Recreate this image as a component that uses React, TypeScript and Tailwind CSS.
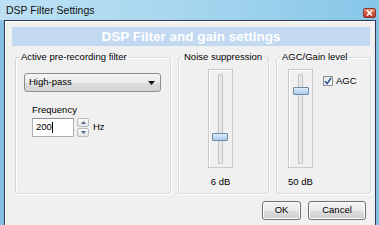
import React from "react";

function CloseButton() {
  return (
    <div className="mt-[8px] w-[13px] h-[10px] rounded-[2px] border border-[#8a3a2c] bg-gradient-to-b from-[#e9a08e] via-[#d0553d] to-[#c0382a] flex items-center justify-center">
      <svg width="7" height="6" viewBox="0 0 7 6">
        <path d="M1 0.5 L6 5.5 M6 0.5 L1 5.5" stroke="#ffffff" strokeWidth="1.6" />
      </svg>
    </div>
  );
}

function Slider({ thumbTop, thumbLeft }: { thumbTop: number; thumbLeft: number }) {
  return (
    <div className="relative w-[25px] h-[99px] border border-[#c9c9c9] bg-[#f0f0f0] shadow-[inset_1px_1px_0_#ffffff]">
      <div className="absolute left-[9px] top-[4px] bottom-[3px] w-[5px] border border-[#c4c4c4] bg-[#e8e8e8] rounded-[1px]" />
      <div
        className="absolute w-[16px] h-[8px] border border-[#6e8aa6] bg-gradient-to-b from-[#dcebf9] to-[#a9cbec] rounded-[1px]"
        style={{ top: thumbTop, left: thumbLeft }}
      />
    </div>
  );
}

function Group({ title, width, children }: { title: string; width: string; children: React.ReactNode }) {
  return (
    <fieldset
      className={`${width} h-[143px] border border-[#d2d8dc] rounded-[3px] shadow-[inset_1px_1px_0_#ffffff,1px_1px_0_#ffffff] min-w-0`}
    >
      <legend className="ml-[3px] px-[2px] leading-[12px]">{title}</legend>
      {children}
    </fieldset>
  );
}

function Button({ label, width }: { label: string; width: string }) {
  return (
    <div
      className={`${width} h-[19px] rounded-[3px] border border-[#707070] bg-[linear-gradient(to_bottom,#f3f3f3_0%,#ebebeb_50%,#dddddd_51%,#cfcfcf_100%)] shadow-[inset_0_0_0_1px_#fcfcfc] flex items-center justify-center`}
    >
      {label}
    </div>
  );
}

export default function App() {
  return (
    <div className="w-[379px] h-[225px] overflow-hidden flex flex-col bg-[#86bfe3] font-['Liberation_Sans',Arial,sans-serif] text-[9.5px] text-black">
      <div className="h-[20px] shrink-0 flex items-start justify-between pl-[6px] pr-[3px] bg-gradient-to-r from-[#bde1f3] via-[#a6d6ef] to-[#86c6e8]">
        <span className="text-[10.5px] leading-[20px] text-[#111]">DSP Filter Settings</span>
        <CloseButton />
      </div>
      <div className="flex-1 ml-[4px] mr-[3px] border border-b-0 border-[#2c3b4e] bg-[#f0f0f0] shadow-[inset_1px_1px_0_#ffffff] flex flex-col">
        <div className="mt-[6px] ml-[7px] mr-[5px] h-[19px] bg-[#c2d9f1] flex items-center justify-center">
          <span className="text-[13.5px] font-bold text-white leading-[19px]">DSP Filter and gain settings</span>
        </div>

        <div className="mt-[5px] ml-[10px] flex gap-[7px]">
          <Group title="Active pre-recording filter" width="w-[156px]">
            <div className="mt-[10px] ml-[8px] w-[137px] h-[19px] rounded-[3px] border border-[#8e8f8f] bg-[linear-gradient(to_bottom,#f4f4f4_0%,#ebebeb_50%,#dddddd_51%,#d4d4d4_100%)] flex items-center justify-between pl-[4px] pr-[5px]">
              <span>High-pass</span>
              <svg width="7" height="4" viewBox="0 0 7 4">
                <path d="M0 0 H7 L3.5 4 Z" fill="#111" />
              </svg>
            </div>
            <div className="mt-[12px] ml-[16px] leading-[12px]">Frequency</div>
            <div className="mt-[2px] ml-[16px] flex items-center">
              <div className="w-[42px] h-[19px] border border-[#abadb3] border-t-[#8f9399] bg-white flex items-center pl-[3px]">
                <span>200</span>
                <span className="w-px h-[11px] bg-black" />
              </div>
              <div className="ml-[3px] w-[12px] h-[19px] flex flex-col gap-px">
                <div className="flex-1 border border-[#b7bcc2] rounded-[2px] bg-gradient-to-b from-[#fafafa] to-[#e4e6e9] flex items-center justify-center">
                  <svg width="5" height="3" viewBox="0 0 5 3">
                    <path d="M0 3 H5 L2.5 0 Z" fill="#4e6a8c" />
                  </svg>
                </div>
                <div className="flex-1 border border-[#b7bcc2] rounded-[2px] bg-gradient-to-b from-[#fafafa] to-[#e4e6e9] flex items-center justify-center">
                  <svg width="5" height="3" viewBox="0 0 5 3">
                    <path d="M0 0 H5 L2.5 3 Z" fill="#4e6a8c" />
                  </svg>
                </div>
              </div>
              <span className="ml-[4px]">Hz</span>
            </div>
          </Group>

          <Group title="Noise suppression" width="w-[91px]">
            <div className="mt-[6px] ml-[29px] w-[25px] flex flex-col items-center">
              <Slider thumbTop={63} thumbLeft={3} />
              <div className="mt-[8px] leading-[12px] whitespace-nowrap">6 dB</div>
            </div>
          </Group>

          <Group title="AGC/Gain level" width="w-[95px]">
            <div className="mt-[6px] ml-[11px] flex items-start">
              <div className="w-[25px] flex flex-col items-center">
                <Slider thumbTop={17} thumbLeft={4} />
                <div className="mt-[8px] leading-[12px] whitespace-nowrap">50 dB</div>
              </div>
              <div className="ml-[10px] mt-[6px] flex items-center gap-[3px]">
                <div className="w-[10px] h-[10px] border border-[#8f8f8f] bg-gradient-to-br from-[#dfe6ee] to-[#f6f8fa] flex items-center justify-center">
                  <svg width="8" height="8" viewBox="0 0 8 8">
                    <path d="M1 4.2 L3.2 6.6 L7 1" stroke="#2c4a8c" strokeWidth="1.5" fill="none" />
                  </svg>
                </div>
                <span className="leading-[12px]">AGC</span>
              </div>
            </div>
          </Group>
        </div>

        <div className="mt-[7px] mr-[9px] flex justify-end gap-[7px]">
          <Button label="OK" width="w-[39px]" />
          <Button label="Cancel" width="w-[58px]" />
        </div>
      </div>
    </div>
  );
}
